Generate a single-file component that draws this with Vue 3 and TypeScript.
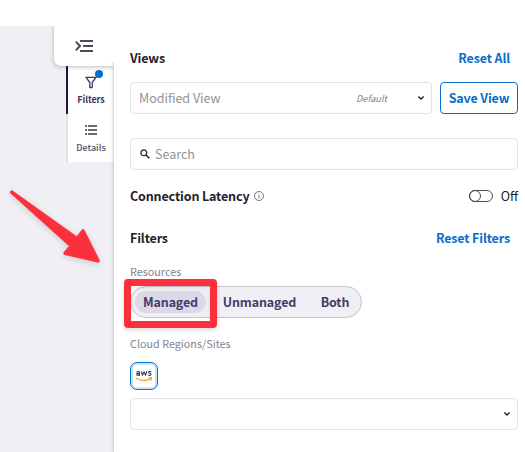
<script setup lang="ts">
import { ref } from 'vue'

const resources = ['Managed', 'Unmanaged', 'Both']
const selected = ref('Managed')
const latencyOn = ref(false)
</script>

<template>
  <main class="page">
    <aside class="rail">
      <div class="collapse">
        <svg width="20" height="14" viewBox="0 0 20 14" fill="none" stroke="#4b4a58" stroke-width="2">
          <path d="M.8 2.6 5 7 .8 11.4M5 2H18M8 7H18M5 12H18" />
        </svg>
      </div>
      <nav class="tabs">
        <button class="tab active">
          <svg class="funnel" width="12" height="13" viewBox="0 0 12 13" fill="none" stroke="#403763" stroke-width="1.3" stroke-linejoin="round">
            <path d="M1 1.4H11L7.2 6.5V11.6H4.8V6.5Z" />
          </svg>
          <span class="dot"></span>
          <span class="filters-label">Filters</span>
        </button>
        <button class="tab">
          <svg class="list" width="14" height="12" viewBox="0 0 14 12" fill="#6b6977">
            <path d="M1 1h2v2H1zM4 1h9v2H4zM1 5h2v2H1zM4 5h9v2H4zM1 9h2v2H1zM4 9h9v2H4z" />
          </svg>
          <span class="details-label">Details</span>
        </button>
      </nav>
    </aside>

    <section class="panel">
      <header class="row views-head">
        <h2 class="views-title">Views</h2>
        <a class="link reset-all">Reset All</a>
      </header>
      <div class="view-row">
        <div class="field view-select">
          <span class="placeholder modified">Modified View</span>
          <em>Default</em>
          <svg class="chevron" width="8" height="6" viewBox="0 0 8 6"><path d="M1.3 1.4 4 4 6.7 1.4" /></svg>
        </div>
        <button class="save"><span>Save View</span></button>
      </div>
      <div class="field search">
        <svg width="10" height="10" viewBox="0 0 10 10" fill="none" stroke="#25242d" stroke-width="1.3">
          <circle cx="3.8" cy="3.8" r="2.9" /><path d="m6 6 3.3 3.3" stroke-width="1.6" />
        </svg>
        <span class="placeholder search-text">Search</span>
      </div>
      <div class="row latency">
        <h2 class="latency-title">Connection Latency</h2>
        <svg class="info" width="10" height="10" viewBox="0 0 10 10" fill="none" stroke="#55535f" stroke-width=".8">
          <circle cx="5" cy="5" r="4.5" /><path d="M5 4.3V7.5M5 2.5V3.4" />
        </svg>
        <button class="switch" @click="latencyOn = !latencyOn">
          <svg width="24" height="12" viewBox="0 0 24 12" fill="none" stroke="#4c4a56">
            <rect x=".5" y=".5" width="23" height="11" rx="5.5" /><circle :cx="latencyOn ? 18 : 6" cy="6" r="5.5" />
          </svg>
          <span class="off">{{ latencyOn ? 'On' : 'Off' }}</span>
        </button>
      </div>
      <div class="row filters-head">
        <h2 class="filters-title">Filters</h2>
        <a class="link reset-filters">Reset Filters</a>
      </div>
      <label class="caption resources">Resources</label>
      <div class="segments">
        <button
          v-for="item in resources"
          :key="item"
          class="segment"
          :class="[item.toLowerCase(), { selected: item === selected }]"
          @click="selected = item"
        ><span>{{ item }}</span></button>
      </div>
      <label class="caption regions">Cloud Regions/Sites</label>
      <button class="provider">
        <svg width="18" height="12" viewBox="0 0 18 12" fill="none" stroke-linecap="round" stroke-linejoin="round">
          <path stroke="#283548" stroke-width="1.05" d="M1.9 2C2.7 1.3 4.4 1.3 4.4 2.6V5.5M4.4 3.5C2.6 3.1 1.5 3.6 1.6 4.5 1.8 5.7 3.7 5.5 4.4 4.3M6.3 1.7 7.5 5.3 9 1.7 10.5 5.3 11.7 1.7M15.9 1.8C14.8 1.3 13.4 1.5 13.5 2.3 13.6 3.4 16.1 2.9 16.1 4.3 16 5.6 14.3 5.6 13.4 5.1" />
          <path stroke="#ff9b1a" stroke-width="1.2" d="M1.5 8.2C5.8 11 11.2 11 15.1 8.8M14.2 7.9C15.3 7.5 16.3 7.5 16.5 7.8 16.7 8.2 16.4 9.3 15.7 10" />
        </svg>
      </button>
      <div class="field region-select">
        <svg class="chevron" width="8" height="6" viewBox="0 0 8 6"><path d="M1.3 1.4 4 4 6.7 1.4" /></svg>
      </div>
    </section>

    <svg class="arrow" width="110" height="100" viewBox="0 0 110 100">
      <path d="M11.8 12.2 77 58.8 83 51 98 80.7 65.2 73.3 71.5 66Z" fill="#fc2f3c" stroke="#fc2f3c" stroke-width="3.6" stroke-linejoin="round" />
    </svg>
    <div class="highlight"></div>
  </main>
</template>

<style>
body { background: #fff; overflow: hidden; }
</style>

<style scoped>
* { box-sizing: border-box; }
.page {
  position: relative;
  display: grid;
  grid-template-columns: 114px 1fr;
  width: 525px;
  height: 452px;
  padding-top: 26px;
  overflow: hidden;
  font-family: "Noto Sans CJK SC", "Noto Sans", sans-serif;
  font-size: 12.5px;
  color: #23212c;
}
button { border: 0; padding: 0; background: none; font: inherit; color: inherit; }
span, h2, a, em, label { white-space: nowrap; }
.rail { display: flex; flex-direction: column; align-items: flex-end; background: #f0eff4; }
.collapse {
  position: relative;
  z-index: 1;
  display: flex;
  flex: none;
  width: 60px;
  height: 40px;
  padding: 13px 0 0 21px;
  background: #fff;
  border-bottom-left-radius: 7px;
  box-shadow: 0 1px 4px rgb(35 30 50 / 30%);
  clip-path: inset(0 0 -8px -8px);
}
.tabs { width: 48px; background: #fff; }
.tab {
  position: relative;
  display: flex;
  flex-direction: column;
  align-items: center;
  width: 48px;
  height: 48px;
  border-left: 2px solid #e1e0e8;
  font-size: 9px;
  font-weight: 500;
  line-height: 12px;
  color: #4f4d5c;
}
.tab.active { border-color: #1c1930; font-weight: 700; letter-spacing: -.1px; color: #403763; }
.funnel { margin: 10px 0 5px; }
.list { margin: 10px 0 6px; }
.dot { position: absolute; left: 27px; top: 4px; width: 8px; height: 8px; border-radius: 50%; background: #086dcb; }
.panel {
  position: relative;
  z-index: 2;
  display: flex;
  flex-direction: column;
  padding: 22px 7px 0 16px;
  background: #fff;
}
.panel::before {
  content: "";
  position: absolute;
  z-index: -1;
  inset: 36px auto 0 0;
  width: 10px;
  background: #fff;
  box-shadow: -1px 0 3px rgb(35 30 50 / 22%);
  clip-path: inset(0 0 0 -6px);
}
.row { display: flex; align-items: center; height: 20px; }
h2, .link, .save, .segment { font-weight: 700; letter-spacing: -.14px; }
h2 { margin: 0; font-size: 12.5px; line-height: 20px; }
.link { margin-left: auto; padding-right: 8px; line-height: 20px; color: #086dcb; }
.view-row { display: flex; gap: 8px; margin-top: 14px; }
.field { display: flex; align-items: center; height: 32px; border: 1px solid #e0e0e6; border-radius: 4px; }
.placeholder { color: #929297; }
.view-select { width: 302px; padding: 0 6px 0 8px; }
.modified, .search-text, em { line-height: 20px; }
em { margin-left: auto; margin-right: 30px; font-size: 9.2px; color: #85848c; }
.chevron { fill: none; stroke: #23212c; stroke-width: 1.4; }
.save { width: 78px; height: 32px; border: 1px solid #086dcb; border-radius: 4px; line-height: 20px; color: #086dcb; }
.search { margin-top: 24px; padding-left: 9px; gap: 5px; }
.latency { margin-top: 16px; }
.info { margin-left: 5px; }
.switch { display: flex; align-items: center; gap: 8px; margin-left: auto; line-height: 20px; }
.filters-head { margin-top: 22px; }
.caption { font-size: 10.8px; line-height: 16px; color: #85848d; }
.resources { margin-top: 15px; }
.segments {
  display: flex;
  align-items: center;
  width: 232px;
  height: 32px;
  margin-top: 7px;
  padding-left: 4px;
  background: #f0eff4;
  border: 1px solid #c6c3d1;
  border-radius: 16px;
}
.segment { height: 22px; border-radius: 11px; line-height: 22px; color: #453c69; }
.segment.selected { background: #dcd8e8; }
.managed { width: 71px; }
.unmanaged { width: 107px; }
.both { width: 44px; }
.regions { margin-top: 17px; }
.provider {
  display: flex;
  align-items: center;
  justify-content: center;
  width: 28px;
  height: 28px;
  margin-top: 11px;
  border: 1px solid #086dcb;
  border-radius: 7px;
  box-shadow: inset 0 0 0 2px #c7e5ff;
}
.region-select { margin-top: 8px; padding-right: 6px; justify-content: flex-end; }
.arrow { position: absolute; z-index: 3; left: 0; top: 180px; filter: drop-shadow(0 2px 3px rgb(0 0 0 / 15%)); }
.highlight {
  position: absolute;
  z-index: 3;
  left: 124px;
  top: 279px;
  width: 93px;
  height: 49px;
  border: 7px solid #fc2f3c;
  border-radius: 4px;
  box-shadow: 0 2px 4px rgb(0 0 0 / 15%), inset 0 2px 4px rgb(0 0 0 / 8%);
}
</style>
